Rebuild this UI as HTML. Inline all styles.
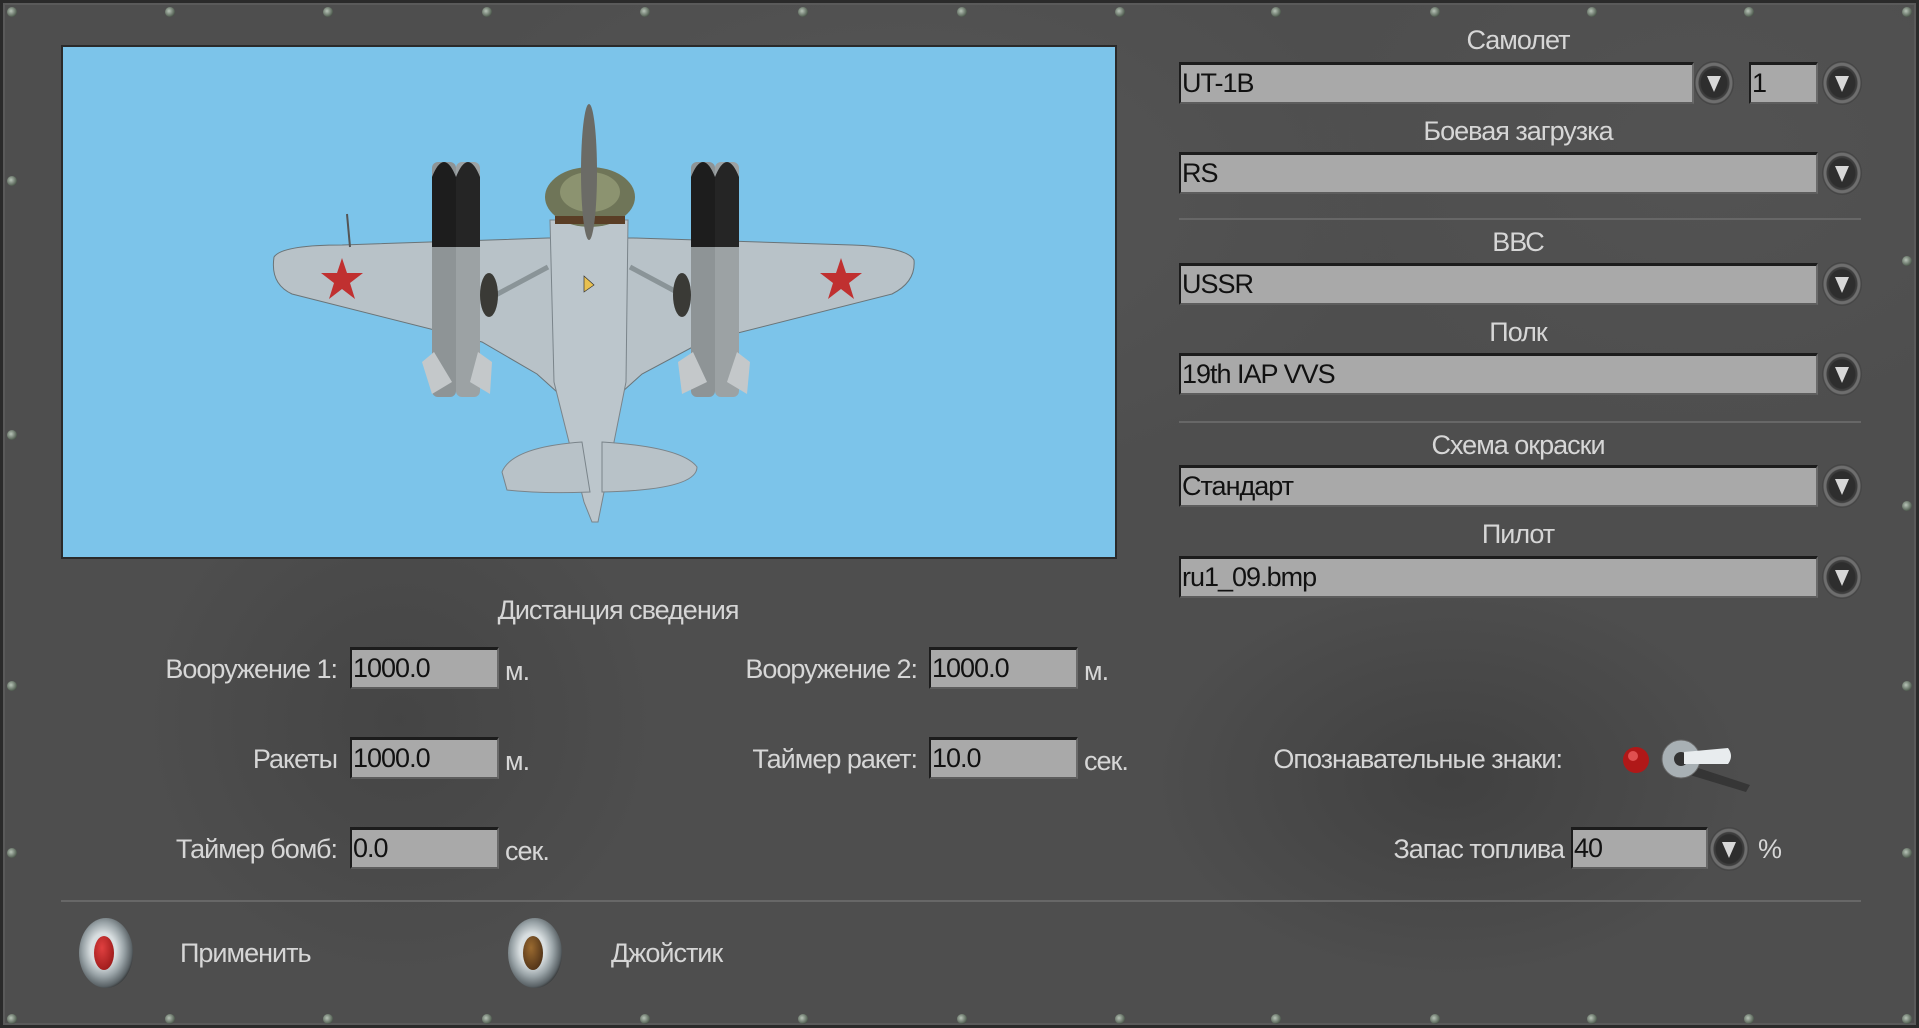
<!DOCTYPE html>
<html><head><meta charset="utf-8"><style>
*{margin:0;padding:0;box-sizing:border-box}
body{width:1919px;height:1028px;overflow:hidden;position:relative;font-family:"Liberation Sans",sans-serif;
background:
radial-gradient(ellipse 300px 200px at 1450px 780px,rgba(40,40,40,.35),transparent),
radial-gradient(ellipse 260px 260px at 400px 720px,rgba(40,40,40,.25),transparent),
radial-gradient(ellipse 500px 300px at 900px 200px,rgba(110,110,110,.25),transparent),
radial-gradient(ellipse 400px 300px at 1700px 150px,rgba(100,100,100,.2),transparent),
#4e4e4e;}
.frame{position:absolute;left:0;top:0;width:1919px;height:1028px;border:3px solid #2a2a2a;box-shadow:inset 0 0 0 2px #5a5a5a}
.lbl{position:absolute;color:#d6d6d6;font-size:27px;white-space:nowrap;letter-spacing:-1px}
.c{transform:translateX(-50%)}
.r{text-align:right}
.f{position:absolute;background:#a9a9a9;border-top:3px solid #1c1c1c;border-left:2px solid #1c1c1c;border-bottom:2px solid #5d5d5d;border-right:2px solid #6a6a6a;color:#111;font-size:27px;letter-spacing:-1px;padding-left:1px;line-height:36px}
.dd{position:absolute;width:40px;height:44px;border-radius:50%;background:radial-gradient(ellipse at 50% 50%,#2e2e2e 0 13px,#3d3d3d 14px 15px,#6e6e6e 16px 18px,#454545 19px 20px,transparent 21px)}
.dd:after{content:"";position:absolute;left:13px;top:15px;border-left:7px solid transparent;border-right:7px solid transparent;border-top:16px solid #d8d8d8}
.sep{position:absolute;height:2px;background:#676767}
.rv{position:absolute;width:10px;height:10px;border-radius:50%;background:radial-gradient(circle at 40% 40%,#b8c4b8,#5d6a5d 60%,#222 100%)}
.view{position:absolute;left:61px;top:45px;width:1056px;height:514px;background:#7cc4ea;border:2px solid #2a2a2a;overflow:hidden}
.btn{position:absolute;width:54px;height:70px;border-radius:50%;background:radial-gradient(ellipse at 45% 45%,#d8dee0 0 30%,#98a2a6 50%,#5a6266 68%,#2e2e2e 75%,transparent 78%)}
.btn i{position:absolute;left:15px;top:18px;width:20px;height:34px;border-radius:50%}
</style></head><body>
<div class="frame"></div>

<div class="view">
<svg width="1056" height="514" viewBox="61 45 1056 514">
 <path d="M272 255 Q280 243 340 243 L546 236 L632 236 L850 243 Q905 245 912 258 Q914 280 890 292 L700 340 L640 372 L620 390 L555 390 L535 372 L480 340 L290 292 Q268 282 272 255Z" fill="#b8c2c8" stroke="#6a7478" stroke-width="1"/>
 <path d="M548 218 L626 218 L624 380 L600 500 L596 520 L590 520 L582 500 L552 380Z" fill="#bcc6cc" stroke="#7a848a"/>
 <path d="M500 470 Q510 445 580 440 L588 490 Q540 492 505 488Z" fill="#b8c2c8" stroke="#7a848a"/>
 <path d="M600 440 Q680 445 695 465 Q695 488 600 490Z" fill="#b8c2c8" stroke="#7a848a"/>
 <ellipse cx="588" cy="195" rx="45" ry="30" fill="#6f7558"/>
 <ellipse cx="588" cy="190" rx="30" ry="20" fill="#8c9370"/>
 <rect x="553" y="214" width="70" height="8" fill="#5a3e26"/>
 <ellipse cx="587" cy="170" rx="8" ry="68" fill="#6b6b66"/>
 <path d="M546 265 L490 295 M628 265 L684 295" stroke="#8a9498" stroke-width="5"/>
 <ellipse cx="487" cy="293" rx="9" ry="22" fill="#3a3a36"/>
 <ellipse cx="680" cy="293" rx="9" ry="22" fill="#3a3a36"/>
 <g>
  <rect x="430" y="160" width="24" height="235" rx="6" fill="#8e9496"/>
  <rect x="454" y="160" width="24" height="235" rx="6" fill="#9ca2a4"/>
  <path d="M430 245 L430 175 Q442 145 454 175 L454 245Z" fill="#1d1d1d"/>
  <path d="M454 245 L454 175 Q466 145 478 175 L478 245Z" fill="#252525"/>
  <path d="M432 350 L420 360 L430 392 L450 380Z M476 350 L490 360 L488 392 L468 380Z" fill="#c4c8ca"/>
  <rect x="689" y="160" width="24" height="235" rx="6" fill="#8e9496"/>
  <rect x="713" y="160" width="24" height="235" rx="6" fill="#9ca2a4"/>
  <path d="M689 245 L689 175 Q701 145 713 175 L713 245Z" fill="#1d1d1d"/>
  <path d="M713 245 L713 175 Q725 145 737 175 L737 245Z" fill="#252525"/>
  <path d="M691 350 L676 360 L680 392 L705 380Z M735 350 L748 360 L745 392 L725 380Z" fill="#c4c8ca"/>
 </g>
 <polygon points="340,256 345,271 361,271 348,281 353,297 340,287 327,297 332,281 319,271 335,271" fill="#c03030"/>
 <polygon points="839,256 844,271 860,271 847,281 852,297 839,287 826,297 831,281 818,271 834,271" fill="#c03030"/>
 <path d="M582 274 L582 290 L592 283Z" fill="#e8c050" stroke="#333" stroke-width=".7"/>
 <line x1="345" y1="212" x2="348" y2="245" stroke="#555" stroke-width="2"/>
</svg>
</div>

<div class="lbl c" style="left:1518px;top:25px">Самолет</div>
<div class="f" style="left:1179px;top:62px;width:515px;height:42px">UT-1B</div>
<div class="dd" style="left:1694px;top:61px"></div>
<div class="f" style="left:1749px;top:62px;width:69px;height:42px">1</div>
<div class="dd" style="left:1822px;top:61px"></div>

<div class="lbl c" style="left:1518px;top:116px">Боевая загрузка</div>
<div class="f" style="left:1179px;top:152px;width:639px;height:42px">RS</div>
<div class="dd" style="left:1822px;top:151px"></div>
<div class="sep" style="left:1179px;top:218px;width:682px"></div>

<div class="lbl c" style="left:1518px;top:227px">ВВС</div>
<div class="f" style="left:1179px;top:263px;width:639px;height:42px">USSR</div>
<div class="dd" style="left:1822px;top:262px"></div>

<div class="lbl c" style="left:1518px;top:317px">Полк</div>
<div class="f" style="left:1179px;top:353px;width:639px;height:42px">19th IAP VVS</div>
<div class="dd" style="left:1822px;top:352px"></div>
<div class="sep" style="left:1179px;top:421px;width:682px"></div>

<div class="lbl c" style="left:1518px;top:430px">Схема окраски</div>
<div class="f" style="left:1179px;top:465px;width:639px;height:42px">Стандарт</div>
<div class="dd" style="left:1822px;top:464px"></div>

<div class="lbl c" style="left:1518px;top:519px">Пилот</div>
<div class="f" style="left:1179px;top:556px;width:639px;height:42px">ru1_09.bmp</div>
<div class="dd" style="left:1822px;top:555px"></div>

<div class="lbl c" style="left:618px;top:595px">Дистанция сведения</div>

<div class="lbl r" style="right:1582px;top:654px">Вооружение 1:</div>
<div class="f" style="left:350px;top:647px;width:149px;height:42px">1000.0</div>
<div class="lbl" style="left:505px;top:656px">м.</div>
<div class="lbl r" style="right:1002px;top:654px">Вооружение 2:</div>
<div class="f" style="left:929px;top:647px;width:149px;height:42px">1000.0</div>
<div class="lbl" style="left:1084px;top:656px">м.</div>

<div class="lbl r" style="right:1582px;top:744px">Ракеты</div>
<div class="f" style="left:350px;top:737px;width:149px;height:42px">1000.0</div>
<div class="lbl" style="left:505px;top:746px">м.</div>
<div class="lbl r" style="right:1002px;top:744px">Таймер ракет:</div>
<div class="f" style="left:929px;top:737px;width:149px;height:42px">10.0</div>
<div class="lbl" style="left:1084px;top:746px">сек.</div>

<div class="lbl r" style="right:1582px;top:834px">Таймер бомб:</div>
<div class="f" style="left:350px;top:827px;width:149px;height:42px">0.0</div>
<div class="lbl" style="left:505px;top:836px">сек.</div>

<div class="lbl r" style="right:357px;top:744px">Опознавательные знаки:</div>
<svg style="position:absolute;left:1610px;top:730px" width="150" height="70">
 <circle cx="26" cy="30" r="13" fill="#b01818"/><circle cx="23" cy="26" r="5" fill="#e05050"/>
 <path d="M70 32 L140 55 L136 62 L70 42Z" fill="#2c2c2c" opacity=".7"/>
 <circle cx="71" cy="29" r="19" fill="#a8b0b4" stroke="#666"/>
 <circle cx="71" cy="29" r="7" fill="#333"/>
 <path d="M74 22 L118 18 Q124 26 118 34 L74 34Z" fill="#e8ecee"/>
</svg>

<div class="lbl r" style="right:355px;top:834px">Запас топлива</div>
<div class="f" style="left:1571px;top:827px;width:137px;height:42px">40</div>
<div class="dd" style="left:1709px;top:827px"></div>
<div class="lbl" style="left:1758px;top:834px">%</div>

<div class="sep" style="left:61px;top:900px;width:1800px"></div>

<div class="btn" style="left:79px;top:918px"><i style="background:radial-gradient(ellipse at 40% 35%,#e04040,#8a1010)"></i></div>
<div class="lbl" style="left:180px;top:938px">Применить</div>
<div class="btn" style="left:508px;top:918px"><i style="background:radial-gradient(ellipse at 40% 35%,#9a6a30,#3a2210)"></i></div>
<div class="lbl" style="left:611px;top:938px">Джойстик</div>

<div class="rv" style="left:7px;top:7px"></div><div class="rv" style="left:165px;top:7px"></div><div class="rv" style="left:323px;top:7px"></div><div class="rv" style="left:482px;top:7px"></div><div class="rv" style="left:640px;top:7px"></div><div class="rv" style="left:798px;top:7px"></div><div class="rv" style="left:957px;top:7px"></div><div class="rv" style="left:1115px;top:7px"></div><div class="rv" style="left:1271px;top:7px"></div><div class="rv" style="left:1430px;top:7px"></div><div class="rv" style="left:1587px;top:7px"></div><div class="rv" style="left:1744px;top:7px"></div><div class="rv" style="left:1902px;top:7px"></div>
<div class="rv" style="left:7px;top:1014px"></div><div class="rv" style="left:165px;top:1014px"></div><div class="rv" style="left:323px;top:1014px"></div><div class="rv" style="left:482px;top:1014px"></div><div class="rv" style="left:640px;top:1014px"></div><div class="rv" style="left:798px;top:1014px"></div><div class="rv" style="left:957px;top:1014px"></div><div class="rv" style="left:1115px;top:1014px"></div><div class="rv" style="left:1271px;top:1014px"></div><div class="rv" style="left:1430px;top:1014px"></div><div class="rv" style="left:1587px;top:1014px"></div><div class="rv" style="left:1744px;top:1014px"></div><div class="rv" style="left:1902px;top:1014px"></div>
<div class="rv" style="left:7px;top:176px"></div><div class="rv" style="left:7px;top:430px"></div><div class="rv" style="left:7px;top:681px"></div><div class="rv" style="left:7px;top:848px"></div>
<div class="rv" style="left:1902px;top:256px"></div><div class="rv" style="left:1902px;top:501px"></div><div class="rv" style="left:1902px;top:681px"></div><div class="rv" style="left:1902px;top:848px"></div>
</body></html>
